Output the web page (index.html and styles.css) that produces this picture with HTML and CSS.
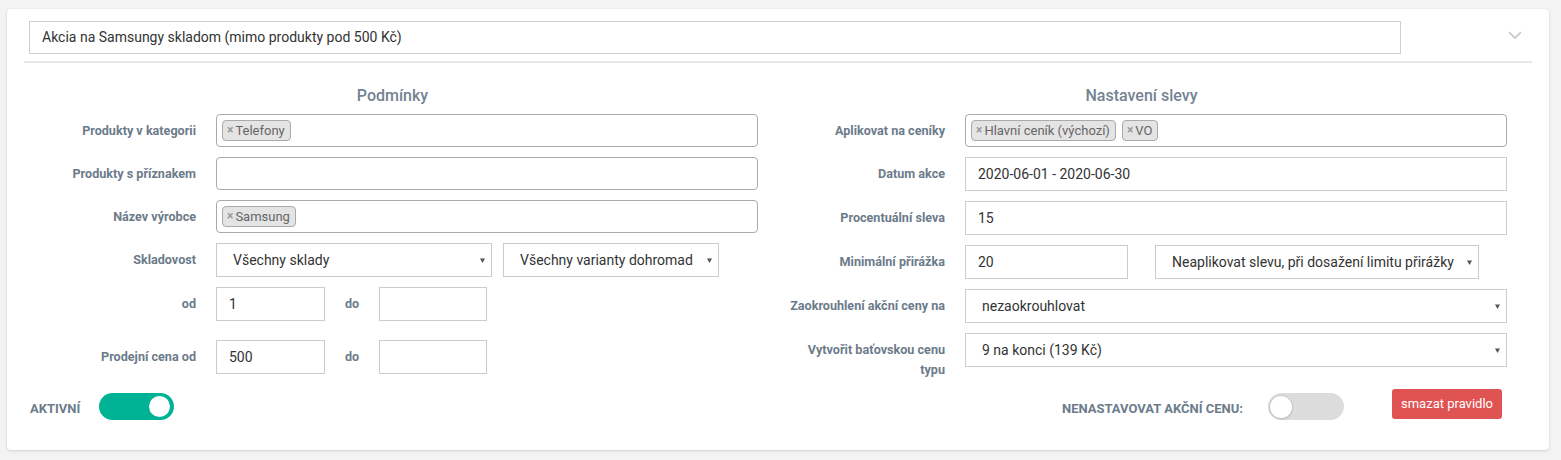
FILE: index.html
```html
<!DOCTYPE html>
<html lang="cs">
<head>
<meta charset="utf-8">
<title>Pravidlo akce</title>
<link rel="stylesheet" href="styles.css">
</head>
<body>
<div class="card">
  <div class="card-head">
    <div class="title-input">Akcia na Samsungy skladom (mimo produkty pod 500 Kč)</div>
    <svg class="chevron" width="14" height="9" viewBox="0 0 14 9"><polyline points="1,1 7,7 13,1" fill="none" stroke="#c4c4c4" stroke-width="1.6"/></svg>
  </div>

  <div class="card-body">
    <div class="col">
      <h3 class="col-title">Podmínky</h3>
      <div class="row">
        <div class="lbl">Produkty v kategorii</div>
        <div class="ctrl"><div class="tags"><span class="tag"><span class="x">×</span>Telefony</span></div></div>
      </div>
      <div class="row">
        <div class="lbl">Produkty s příznakem</div>
        <div class="ctrl"><div class="tags"></div></div>
      </div>
      <div class="row">
        <div class="lbl">Název výrobce</div>
        <div class="ctrl"><div class="tags"><span class="tag"><span class="x">×</span>Samsung</span></div></div>
      </div>
      <div class="row">
        <div class="lbl">Skladovost</div>
        <div class="ctrl">
          <div class="select w276"><span>Všechny sklady</span><svg class="caret" width="5" height="5" viewBox="0 0 5 5"><polygon points="0,0.5 5,0.5 2.5,5" fill="#555"/></svg></div>
          <div class="select w216"><span>Všechny varianty dohromad</span><svg class="caret" width="5" height="5" viewBox="0 0 5 5"><polygon points="0,0.5 5,0.5 2.5,5" fill="#555"/></svg></div>
        </div>
      </div>
      <div class="row row-gap">
        <div class="lbl">od</div>
        <div class="ctrl range">
          <div class="input w109">1</div>
          <div class="lbl-inline">do</div>
          <div class="input w108"></div>
        </div>
      </div>
      <div class="row">
        <div class="lbl">Prodejní cena od</div>
        <div class="ctrl range">
          <div class="input w109">500</div>
          <div class="lbl-inline">do</div>
          <div class="input w108"></div>
        </div>
      </div>
    </div>

    <div class="col">
      <h3 class="col-title">Nastavení slevy</h3>
      <div class="row">
        <div class="lbl">Aplikovat na ceníky</div>
        <div class="ctrl"><div class="tags"><span class="tag"><span class="x">×</span>Hlavní ceník (výchozí)</span><span class="tag"><span class="x">×</span>VO</span></div></div>
      </div>
      <div class="row">
        <div class="lbl">Datum akce</div>
        <div class="ctrl"><div class="input full">2020-06-01 - 2020-06-30</div></div>
      </div>
      <div class="row">
        <div class="lbl">Procentuální sleva</div>
        <div class="ctrl"><div class="input full">15</div></div>
      </div>
      <div class="row">
        <div class="lbl">Minimální přirážka</div>
        <div class="ctrl gap27">
          <div class="input w163">20</div>
          <div class="select w324"><span>Neaplikovat slevu, při dosažení limitu přirážky</span><svg class="caret" width="5" height="5" viewBox="0 0 5 5"><polygon points="0,0.5 5,0.5 2.5,5" fill="#555"/></svg></div>
        </div>
      </div>
      <div class="row">
        <div class="lbl">Zaokrouhlení akční ceny na</div>
        <div class="ctrl"><div class="select full"><span>nezaokrouhlovat</span><svg class="caret" width="5" height="5" viewBox="0 0 5 5"><polygon points="0,0.5 5,0.5 2.5,5" fill="#555"/></svg></div></div>
      </div>
      <div class="row">
        <div class="lbl">Vytvořit baťovskou cenu typu</div>
        <div class="ctrl"><div class="select full"><span>9 na konci (139 Kč)</span><svg class="caret" width="5" height="5" viewBox="0 0 5 5"><polygon points="0,0.5 5,0.5 2.5,5" fill="#555"/></svg></div></div>
      </div>
    </div>
  </div>

  <div class="card-foot">
    <div class="foot-left">
      <span class="foot-lbl aktivni">AKTIVNÍ</span>
      <span class="switch on"><span class="knob"></span></span>
    </div>
    <div class="foot-right">
      <span class="foot-lbl">NENASTAVOVAT AKČNÍ CENU:</span>
      <span class="switch off"><span class="knob"></span></span>
      <button class="btn-danger" type="button">smazat pravidlo</button>
    </div>
  </div>
</div>
</body>
</html>
```

FILE: styles.css
```css
* { box-sizing: border-box; }

html, body {
  margin: 0;
  padding: 0;
}

body {
  background: #f3f3f3;
  font-family: Roboto, "Noto Sans", "Liberation Sans", sans-serif;
  color: #333;
  width: 1561px;
  height: 460px;
  overflow: hidden;
}

.card {
  width: 1542px;
  height: 441px;
  margin: 9px 0 0 7px;
  background: #fff;
  border-radius: 4px;
  box-shadow: 0 1px 3px rgba(0, 0, 0, 0.12), 0 0 1px rgba(0, 0, 0, 0.12);
}

/* header */
.card-head {
  margin: 0 17px;
  padding: 12px 0 7px 5px;
  border-bottom: 2px solid #e8e8e8;
  display: flex;
  align-items: flex-start;
}

.title-input {
  width: 1372px;
  height: 33px;
  border: 1px solid #cfcfcf;
  padding: 0 12px;
  font-size: 14px;
  line-height: 31px;
  color: #333;
}

.chevron {
  margin: 10px 10px 0 auto;
  display: block;
}

/* body */
.card-body {
  display: grid;
  grid-template-columns: 749px 749px;
  padding: 23px 0 0 11px;
}

.col-title {
  margin: 0 0 8px;
  font-size: 16px;
  line-height: 20px;
  font-weight: 500;
  text-align: center;
  color: #748392;
}

.row {
  display: flex;
  align-items: flex-start;
  margin-bottom: 10px;
}

.row:last-child { margin-bottom: 0; }
.row-gap { margin-bottom: 19px; }

.lbl {
  flex: none;
  width: 178px;
  padding: 7px 0 0 16px;
  text-align: right;
  font-size: 12.6px;
  line-height: 20px;
  font-weight: 700;
  color: #6c7b8a;
}

.ctrl {
  flex: none;
  width: 542px;
  margin-left: 20px;
  display: flex;
  gap: 11px;
}

.ctrl.gap27 { gap: 27px; }
.ctrl.range { gap: 20px; }

.lbl-inline {
  padding-top: 7px;
  font-size: 12.6px;
  line-height: 20px;
  font-weight: 700;
  color: #6c7b8a;
}

/* tag input */
.tags {
  width: 100%;
  height: 33px;
  border: 1px solid #aaa;
  border-radius: 4px;
  padding: 5px 5px 0;
  display: flex;
  gap: 6px;
  align-items: flex-start;
}

.tag {
  height: 21px;
  border: 1px solid #aaa;
  border-radius: 4px;
  background: #e4e4e4;
  padding: 0 5px 0 4px;
  font-size: 13px;
  line-height: 19px;
  color: #666;
  display: inline-flex;
  align-items: center;
}

.tag .x {
  font-size: 12px;
  font-weight: 700;
  color: #999;
  margin-right: 2px;
}

/* inputs */
.input,
.select {
  height: 34px;
  border: 1px solid #ccc;
  font-size: 14px;
  line-height: 32px;
  color: #333;
  white-space: nowrap;
}

.input { padding: 0 12px; }

.select {
  padding: 0 6px 0 16px;
  display: flex;
  align-items: center;
  justify-content: space-between;
}

.caret { display: block; flex: none; }

.full { width: 542px; }
.w276 { width: 276px; }
.w216 { width: 216px; }
.w109 { width: 109px; }
.w108 { width: 108px; }
.w163 { width: 163px; }
.w324 { width: 324px; }

/* footer */
.card-foot {
  display: grid;
  grid-template-columns: 749px 749px;
  padding-left: 11px;
  margin-top: 9px;
}

.foot-left,
.foot-right {
  display: flex;
  align-items: flex-start;
}

.foot-left { padding-left: 12px; }

.foot-right {
  justify-content: flex-end;
  padding-right: 14px;
}

.foot-lbl {
  margin-top: 10px;
  font-size: 13px;
  line-height: 20px;
  font-weight: 700;
  color: #6c7b8a;
}

.foot-lbl.aktivni { width: 69px; }

.switch {
  margin-top: 4px;
  height: 27px;
  border-radius: 14px;
  display: flex;
  align-items: center;
}

.switch.on {
  width: 75px;
  background: #00b394;
  justify-content: flex-end;
  padding: 0 4px;
}

.switch.off {
  width: 76px;
  margin-left: 25px;
  background: #dcdcdc;
  padding: 0 2px;
}

.knob {
  width: 21px;
  height: 21px;
  border-radius: 50%;
  background: #fff;
}

.switch.off .knob {
  width: 22px;
  height: 22px;
  box-shadow: 0 0 0 1px #c8c8c8, 0 1px 2px rgba(0, 0, 0, 0.25);
}

.btn-danger {
  margin-left: 48px;
  width: 110px;
  height: 30px;
  border: 0;
  border-radius: 3px;
  background: #e05353;
  color: #fff;
  font-family: Roboto, "Noto Sans", sans-serif;
  font-size: 13px;
  line-height: 30px;
  padding: 0;
  padding-bottom: 3px;
}
```
